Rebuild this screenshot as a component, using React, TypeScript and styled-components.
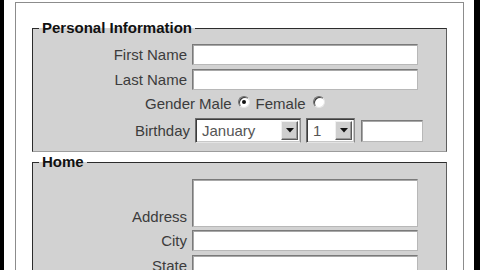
import React from 'react';
import styled, { createGlobalStyle } from 'styled-components';

const GlobalStyle = createGlobalStyle`
  html, body {
    margin: 0;
    padding: 0;
    background: #000;
    overflow: hidden;
  }
  * { box-sizing: border-box; }
`;

const Screen = styled.div`
  width: 470px;
  height: 270px;
  margin-left: 4px;
  background: #fff;
  padding: 2px 0 0 11px;
  overflow: hidden;
  font-family: "Liberation Sans", Arial, sans-serif;
`;

const Frame = styled.div`
  width: 449px;
  height: 300px;
  border: 1px solid #8c8c8c;
  border-bottom: none;
  padding: 17px 15px 0 16px;
`;

const Group = styled.fieldset<{ $gap?: number }>`
  width: 415px;
  margin: 0 0 ${(p) => p.$gap ?? 0}px 0;
  padding: 0 6px 8px 6px;
  background: #d2d2d2;
  border: 1px solid;
  border-color: #2c2c2c #5e5e5e #9c9c9c #2c2c2c;
`;

const Legend = styled.legend`
  padding: 0 3px;
  font-size: 15px;
  line-height: 16px;
  font-weight: bold;
  color: #111;
`;

const Row = styled.div<{ $top: number; $align?: string }>`
  display: flex;
  align-items: ${(p) => p.$align ?? 'center'};
  margin-top: ${(p) => p.$top}px;
`;

const Label = styled.span<{ $w?: number; $pb?: number }>`
  width: ${(p) => p.$w ?? 148}px;
  margin-right: 5px;
  text-align: right;
  font-size: 15px;
  line-height: 17px;
  color: #3c3c3c;
  padding-bottom: ${(p) => p.$pb ?? 0}px;
`;

const TextBox = styled.div<{ $w: number; $h: number }>`
  width: ${(p) => p.$w}px;
  height: ${(p) => p.$h}px;
  background: #fff;
  border: 1px solid;
  border-color: #7a7a7a #b8b8b8 #b8b8b8 #7a7a7a;
  box-shadow: inset 1px 1px 0 #a8a8a8;
`;

const Choices = styled.div`
  display: flex;
  align-items: center;
  height: 20px;
  padding-left: 106px;
  font-size: 15px;
  color: #3c3c3c;
`;

const Word = styled.span<{ $ml?: number }>`
  margin-left: ${(p) => p.$ml ?? 0}px;
  line-height: 17px;
`;

const Radio = styled.span<{ $on?: boolean; $ml: number }>`
  position: relative;
  display: inline-block;
  width: 12px;
  height: 12px;
  margin-left: ${(p) => p.$ml}px;
  margin-top: -3px;
  border-radius: 50%;
  background: #fff;
  border: 1px solid;
  border-color: #6e6e6e #e6e6e6 #e6e6e6 #6e6e6e;
  box-shadow: inset 1px 1px 0 #3a3a3a;
  &::after {
    content: '';
    display: ${(p) => (p.$on ? 'block' : 'none')};
    position: absolute;
    left: 3px;
    top: 3px;
    width: 4px;
    height: 4px;
    border-radius: 50%;
    background: #111;
  }
`;

const Select = styled.div<{ $w: number; $ml: number }>`
  display: flex;
  align-items: center;
  width: ${(p) => p.$w}px;
  height: 25px;
  margin-left: ${(p) => p.$ml}px;
  background: #fff;
  border: 1px solid;
  border-color: #6c6c6c #8a8a8a #e4e4e4 #6c6c6c;
  box-shadow: inset 1px 1px 0 #3c3c3c, inset -1px -1px 0 #c8c8c8;
  padding: 2px 2px 2px 2px;
`;

const SelectText = styled.span`
  flex: 1;
  padding-left: 4px;
  font-size: 15px;
  line-height: 17px;
  color: #555;
`;

const DropButton = styled.span`
  display: flex;
  align-items: center;
  justify-content: center;
  width: 17px;
  height: 19px;
  background: #cfcfcf;
  border: 1px solid;
  border-color: #f0f0f0 #5a5a5a #5a5a5a #f0f0f0;
  box-shadow: inset -1px -1px 0 #999;
`;

const Arrow = () => (
  <svg width="8" height="5" viewBox="0 0 8 5">
    <path d="M0 0H8L4 4.5Z" fill="#111" />
  </svg>
);

const Spacer = styled.span<{ $ml: number }>`
  margin-left: ${(p) => p.$ml}px;
  display: flex;
`;

const App = () => {
  return (
    <>
      <GlobalStyle />
      <Screen>
        <Frame>
          <Group $gap={2}>
            <Legend>Personal Information</Legend>
            <Row $top={8}>
              <Label>First Name</Label>
              <TextBox $w={226} $h={21} />
            </Row>
            <Row $top={4}>
              <Label>Last Name</Label>
              <TextBox $w={226} $h={21} />
            </Row>
            <Row $top={3}>
              <Choices>
                <Word>Gender</Word>
                <Word $ml={4}>Male</Word>
                <Radio $on $ml={6} />
                <Word $ml={6}>Female</Word>
                <Radio $ml={7} />
              </Choices>
            </Row>
            <Row $top={5}>
              <Label $w={151}>Birthday</Label>
              <Select $w={106} $ml={0}>
                <SelectText>January</SelectText>
                <DropButton><Arrow /></DropButton>
              </Select>
              <Select $w={49} $ml={5}>
                <SelectText>1</SelectText>
                <DropButton><Arrow /></DropButton>
              </Select>
              <Spacer $ml={6}>
                <TextBox $w={62} $h={22} />
              </Spacer>
            </Row>
          </Group>
          <Group>
            <Legend>Home</Legend>
            <Row $top={9} $align="flex-end">
              <Label $pb={2}>Address</Label>
              <TextBox $w={226} $h={48} />
            </Row>
            <Row $top={3}>
              <Label>City</Label>
              <TextBox $w={226} $h={21} />
            </Row>
            <Row $top={4}>
              <Label>State</Label>
              <TextBox $w={226} $h={21} />
            </Row>
          </Group>
        </Frame>
      </Screen>
    </>
  );
};

export default App;
